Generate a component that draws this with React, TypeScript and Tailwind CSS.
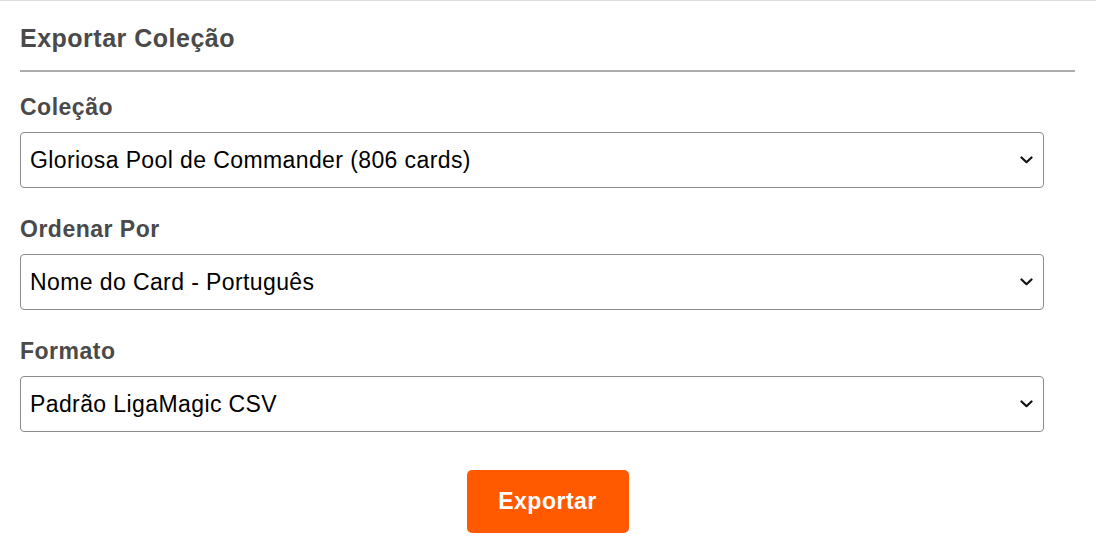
import { useState } from "react";

const fields = [
  {
    label: "Coleção",
    options: ["Gloriosa Pool de Commander (806 cards)"],
  },
  {
    label: "Ordenar Por",
    options: ["Nome do Card - Português", "Nome do Card - Inglês", "Edição"],
  },
  {
    label: "Formato",
    options: ["Padrão LigaMagic CSV", "Texto Simples"],
  },
];

function Chevron() {
  return (
    <svg width="13" height="8" viewBox="0 0 13 8" className="pointer-events-none absolute right-[11px] top-1/2 -translate-y-1/2">
      <polyline points="1.5,1.5 6.5,6.2 11.5,1.5" fill="none" stroke="#111" strokeWidth="2.2" strokeLinecap="round" strokeLinejoin="round" />
    </svg>
  );
}

export default function App() {
  const [values, setValues] = useState(fields.map((f) => f.options[0]));

  return (
    <div className="min-h-[553px] border-t border-[#dcdcdc] bg-white pl-5 pr-[21px] font-['Liberation_Sans',Arial,sans-serif]">
      {/* Header */}
      <h2 className="pt-6 text-[25px] font-bold leading-[26px] tracking-[0.5px] text-[#4a4a4a]">Exportar Coleção</h2>
      <div className="mt-[19px] h-[2px] bg-[#acacac]" />

      {/* Fields */}
      {fields.map((field, i) => (
        <div key={field.label} className={i === 0 ? "mt-6" : "mt-[30px]"}>
          <label className="block text-[23px] font-bold leading-[23px] tracking-[0.5px] text-[#4a4a4a]">{field.label}</label>
          <div className="relative mt-[13px] w-[1024px]">
            <select
              value={values[i]}
              onChange={(e) => setValues(values.map((v, j) => (j === i ? e.target.value : v)))}
              className="block h-[56px] w-full appearance-none rounded-[4px] border border-[#8f8b8d] bg-white pl-[9px] pr-10 text-[23px] leading-[25px] tracking-[0.4px] text-black outline-none"
            >
              {field.options.map((o) => (
                <option key={o}>{o}</option>
              ))}
            </select>
            <Chevron />
          </div>
        </div>
      ))}

      {/* Action */}
      <div className="mt-[38px] flex justify-center">
        <button className="h-[63px] w-[162px] rounded-[5px] bg-[#ff5a00] text-[23px] font-bold tracking-[0.5px] text-white">
          Exportar
        </button>
      </div>
    </div>
  );
}
